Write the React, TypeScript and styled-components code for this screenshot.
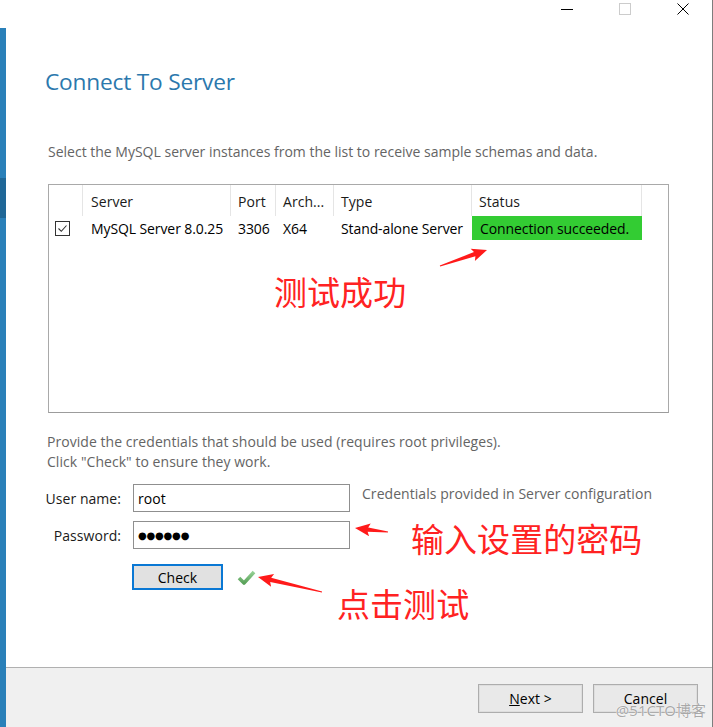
import React from "react";
import styled, { createGlobalStyle } from "styled-components";

const Global = createGlobalStyle`
  html, body { margin: 0; padding: 0; background: #ffffff; }
  * { box-sizing: border-box; }
`;

const UI = `"Open Sans", "Noto Sans", sans-serif`;
const CJK = `"Noto Sans CJK SC", "Noto Sans", sans-serif`;

const Window = styled.div`
  position: relative;
  width: 713px;
  height: 727px;
  border-right: 1px solid #7d7d7d;
  display: flex;
  flex-direction: column;
  font-family: ${UI};
  font-size: 14px;
  letter-spacing: 0.05px;
  color: #1a1a1a;
  overflow: hidden;
`;

const TitleBar = styled.div`
  height: 28px;
  flex: none;
  display: flex;
  justify-content: flex-end;
  align-items: flex-start;
`;

const WinButton = styled.div`
  width: 58px;
  height: 17px;
  display: flex;
  align-items: center;
  justify-content: center;
`;

const Body = styled.div`
  flex: 1;
  display: flex;
  min-height: 0;
`;

const SideStrip = styled.div`
  width: 6px;
  flex: none;
  background: #2a80b9;
  display: flex;
  flex-direction: column;
`;

const SideMarker = styled.div`
  margin-top: 150px;
  height: 40px;
  background: #1f6797;
`;

const Main = styled.div`
  flex: 1;
  display: flex;
  flex-direction: column;
  min-width: 0;
`;

const Content = styled.div`
  flex: 1;
  display: flex;
  flex-direction: column;
  padding-left: 42px;
`;

const Title = styled.h1`
  margin: 39px 0 0 -3px;
  height: 30px;
  line-height: 30px;
  font-family: ${UI};
  font-weight: 400;
  font-size: 22.7px;
  letter-spacing: -0.2px;
  color: #2b78ad;
`;

const Description = styled.p`
  margin: 45px 0 0 0;
  height: 20px;
  line-height: 20px;
  color: #646464;
  letter-spacing: 0px;
`;

const TableBox = styled.div`
  margin-top: 22px;
  width: 621px;
  height: 229px;
  border: 1px solid #a9a9a9;
  border-bottom-color: #9c9c9c;
  display: flex;
  flex-direction: column;
`;

const Cols = `34px 148px 45px 58px 138px 170px`;

const HeaderRow = styled.div`
  display: grid;
  grid-template-columns: ${Cols};
  height: 31px;
`;

const HeaderCell = styled.div<{ $pad?: number }>`
  border-right: 1px solid #e5e5e5;
  padding-left: ${(p) => p.$pad ?? 7}px;
  display: flex;
  align-items: center;
  padding-top: 1px;
  color: #1a1a1a;
  white-space: nowrap;
  overflow: hidden;
`;

const DataRow = styled.div`
  display: grid;
  grid-template-columns: ${Cols};
  height: 24px;
`;

const DataCell = styled.div<{ $pad?: number; $ok?: boolean }>`
  padding-left: ${(p) => p.$pad ?? 7}px;
  display: flex;
  align-items: center;
  white-space: nowrap;
  overflow: hidden;
  color: #000;
  letter-spacing: -0.1px;
  background: ${(p) => (p.$ok ? "#33cc33" : "transparent")};
`;

const CheckBox = styled.div`
  width: 15px;
  height: 15px;
  margin-left: 6px;
  border: 1px solid #333;
  display: flex;
  align-items: center;
  justify-content: center;
  background: #fff;
`;

const Hint = styled.div`
  margin: 19px 0 0 -1px;
  line-height: 20px;
  color: #646464;
`;

const Form = styled.div`
  margin: 12px 0 0 -3px;
  display: grid;
  grid-template-columns: 76px 217px auto;
  column-gap: 12px;
  row-gap: 9px;
  align-items: center;
`;

const Label = styled.label`
  text-align: right;
  white-space: nowrap;
  color: #1a1a1a;
`;

const TextBox = styled.div`
  height: 28px;
  border: 1px solid #8f8f8f;
  background: #fff;
  padding-left: 4px;
  display: flex;
  align-items: center;
  color: #000;
`;

const Dots = styled.span`
  font-family: "DejaVu Sans", sans-serif;
  font-size: 10px;
  letter-spacing: -0.2px;
`;

const ServerNote = styled.div`
  align-self: start;
  color: #646464;
  line-height: 20px;
  white-space: nowrap;
`;

const CheckRow = styled.div`
  grid-column: 2 / 4;
  margin: 6px 0 0 -1px;
  display: flex;
  align-items: center;
  gap: 14px;
`;

const Button = styled.button<{ $focus?: boolean }>`
  height: ${(p) => (p.$focus ? 26 : 29)}px;
  width: ${(p) => (p.$focus ? 91 : 105)}px;
  font-family: ${UI};
  font-size: 14px;
  letter-spacing: 0.05px;
  color: #000;
  background: ${(p) => (p.$focus ? "#e1e1e1" : "#e9e9e9")};
  border: ${(p) => (p.$focus ? "2px solid #0a78d4" : "1px solid #adadad")};
  box-shadow: ${(p) => (p.$focus ? "none" : "inset 0 0 0 1px #dedede")};
  padding: 0;
  margin: 0;
`;

const Footer = styled.div`
  height: 60px;
  flex: none;
  background: #f0f0f0;
  border-top: 1px solid #b0b0b0;
  display: flex;
  justify-content: flex-end;
  align-items: flex-start;
  gap: 10px;
  padding: 16px 14px 0 0;
`;

const Underline = styled.span`
  text-decoration: underline;
`;

const Note = styled.div<{ $x: number; $y: number }>`
  position: absolute;
  left: ${(p) => p.$x}px;
  top: ${(p) => p.$y}px;
  font-family: ${CJK};
  font-size: 33px;
  line-height: 1;
  color: #ff2222;
  white-space: nowrap;
  pointer-events: none;
`;

const Watermark = styled.div`
  position: absolute;
  right: 6px;
  bottom: 7px;
  font-family: "Noto Sans", ${CJK};
  font-size: 15px;
  color: rgba(140, 140, 140, 0.75);
  text-shadow: 0 0 1px #fff, 0 0 1px #fff;
  pointer-events: none;
`;

const Overlay = styled.svg`
  position: absolute;
  left: 0;
  top: 0;
  pointer-events: none;
`;

function arrowPoints(tx: number, ty: number, hx: number, hy: number) {
  const dx = hx - tx;
  const dy = hy - ty;
  const L = Math.hypot(dx, dy);
  const ux = dx / L;
  const uy = dy / L;
  const nx = -uy;
  const ny = ux;
  const pts: [number, number][] = [
    [0, -0.6],
    [L - 13, -2.2],
    [L - 15, -6.5],
    [L, 0],
    [L - 15, 6.5],
    [L - 13, 2.2],
    [0, 0.6],
  ];
  return pts
    .map(([a, b]) => `${(tx + ux * a + nx * b).toFixed(1)},${(ty + uy * a + ny * b).toFixed(1)}`)
    .join(" ");
}

const columns = [
  { h: "", pad: 0 },
  { h: "Server", pad: 8 },
  { h: "Port", pad: 7 },
  { h: "Arch...", pad: 7 },
  { h: "Type", pad: 7 },
  { h: "Status", pad: 7 },
];

export default function App() {
  return (
    <Window>
      <Global />
      <TitleBar>
        <WinButton>
          <svg width="12" height="12" viewBox="0 0 12 12">
            <line x1="0" y1="6.5" x2="12" y2="6.5" stroke="#000" strokeWidth="1" />
          </svg>
        </WinButton>
        <WinButton>
          <svg width="12" height="12" viewBox="0 0 12 12">
            <rect x="0.5" y="0.5" width="11" height="11" fill="none" stroke="#cccccc" strokeWidth="1" />
          </svg>
        </WinButton>
        <WinButton>
          <svg width="12" height="12" viewBox="0 0 12 12">
            <path d="M0.5 0.5 L11.5 11.5 M11.5 0.5 L0.5 11.5" stroke="#000" strokeWidth="1" fill="none" />
          </svg>
        </WinButton>
      </TitleBar>
      <Body>
        <SideStrip>
          <SideMarker />
        </SideStrip>
        <Main>
          <Content>
            <Title>Connect To Server</Title>
            <Description>
              Select the MySQL server instances from the list to receive sample schemas and data.
            </Description>
            <TableBox>
              <HeaderRow>
                {columns.map((c, i) => (
                  <HeaderCell key={i} $pad={c.pad}>
                    {c.h}
                  </HeaderCell>
                ))}
              </HeaderRow>
              <DataRow>
                <DataCell $pad={0}>
                  <CheckBox>
                    <svg width="11" height="11" viewBox="0 0 11 11">
                      <path d="M1.5 5.5 L4.3 8.3 L9.5 2.5" stroke="#333" strokeWidth="1.1" fill="none" />
                    </svg>
                  </CheckBox>
                </DataCell>
                <DataCell $pad={8}>MySQL Server 8.0.25</DataCell>
                <DataCell>3306</DataCell>
                <DataCell>X64</DataCell>
                <DataCell>Stand-alone Server</DataCell>
                <DataCell $ok $pad={8}>
                  Connection succeeded.
                </DataCell>
              </DataRow>
            </TableBox>
            <Hint>
              Provide the credentials that should be used (requires root privileges).
              <br />
              Click "Check" to ensure they work.
            </Hint>
            <Form>
              <Label>User name:</Label>
              <TextBox>root</TextBox>
              <ServerNote>Credentials provided in Server configuration</ServerNote>
              <Label>Password:</Label>
              <TextBox>
                <Dots>●●●●●●</Dots>
              </TextBox>
              <span />
              <span />
              <CheckRow>
                <Button $focus>Check</Button>
                <svg width="20" height="17" viewBox="0 0 20 17">
                  <defs>
                    <linearGradient id="ck" x1="0" y1="0" x2="0" y2="1">
                      <stop offset="0" stopColor="#94d094" />
                      <stop offset="1" stopColor="#5aa25a" />
                    </linearGradient>
                  </defs>
                  <path d="M2 9 L7 14 L17 3" stroke="url(#ck)" strokeWidth="3.6" fill="none" strokeLinejoin="round" />
                </svg>
              </CheckRow>
            </Form>
          </Content>
          <Footer>
            <Button>
              <Underline>N</Underline>ext &gt;
            </Button>
            <Button>Cancel</Button>
          </Footer>
        </Main>
      </Body>

      <Overlay width="713" height="727" viewBox="0 0 713 727">
        <polygon points={arrowPoints(440, 266, 487, 250)} fill="#ff1a1a" />
        <polygon points={arrowPoints(388, 532, 355, 528)} fill="#ff1a1a" />
        <polygon points={arrowPoints(322, 592, 258, 577)} fill="#ff1a1a" />
      </Overlay>
      <Note $x={274} $y={275}>测试成功</Note>
      <Note $x={411} $y={522}>输入设置的密码</Note>
      <Note $x={337} $y={587}>点击测试</Note>
      <Watermark>@51CTO博客</Watermark>
    </Window>
  );
}
